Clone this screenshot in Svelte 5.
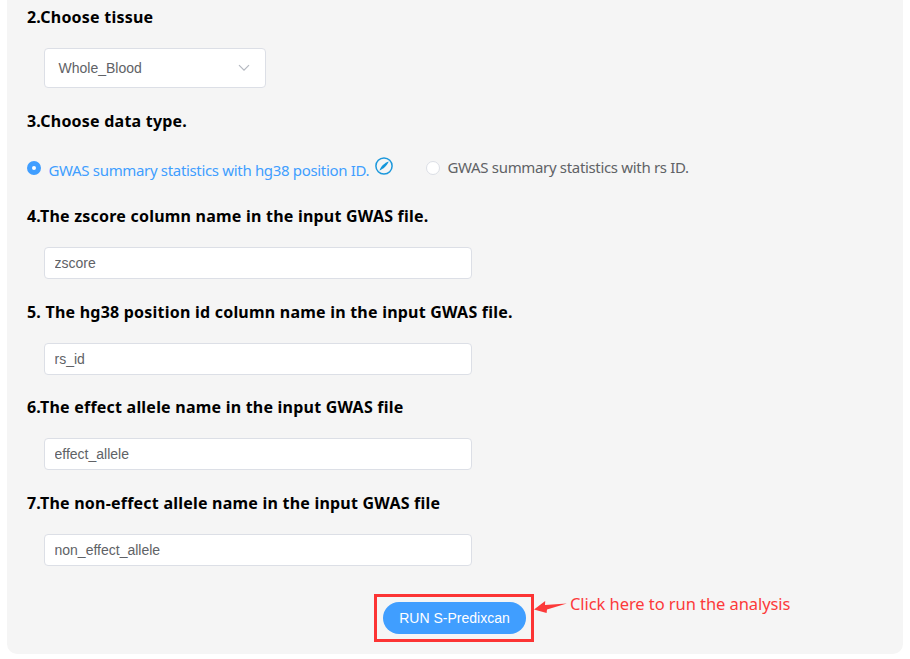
<script>
  const fields = [
    { title: '4.The zscore column name in the input GWAS file.', value: 'zscore' },
    { title: '5. The hg38 position id column name in the input GWAS file.', value: 'rs_id' },
    { title: '6.The effect allele name in the input GWAS file', value: 'effect_allele' },
    { title: '7.The non-effect allele name in the input GWAS file', value: 'non_effect_allele' }
  ];
</script>

<main class="panel">
  <h3>2.Choose tissue</h3>
  <div class="select">
    <span>Whole_Blood</span>
    <svg width="12" height="8" viewBox="0 0 12 8"><path d="M1 1.2 6 6.2 11 1.2" fill="none" stroke="#b4b8c0" stroke-width="1.2" /></svg>
  </div>

  <h3 class="type">3.Choose data type.</h3>
  <div class="radios">
    <div class="radio checked">
      <i class="dot"></i>
      <span class="label">GWAS summary statistics with hg38 position ID.</span>
      <svg class="compass" width="18" height="18" viewBox="0 0 18 18">
        <circle cx="9" cy="9" r="8.1" fill="none" stroke="#1c98dc" stroke-width="1.5" />
        <path d="M13.6 4.4C12.2 4.6 9.4 6.6 7.9 8.1 6.3 9.8 5 12 4.5 13.5 6 13 8.3 11.7 9.9 10.1 11.4 8.5 13.4 5.8 13.6 4.4Z" fill="#1296db" />
      </svg>
    </div>
    <div class="radio">
      <i class="dot"></i>
      <span class="label">GWAS summary statistics with rs ID.</span>
    </div>
  </div>

  {#each fields as field}
    <section>
      <h3>{field.title}</h3>
      <input type="text" value={field.value} />
    </section>
  {/each}

  <footer>
    <div class="frame"><button>RUN S-Predixcan</button></div>
    <svg class="arrow" width="34" height="14" viewBox="0 0 34 14"><path d="M0 9.4 11.2 1 11 4.9 32.8 3.4 13 9.4 12.6 12.9Z" fill="#fc3a3a" /></svg>
    <span class="hint">Click here to run the analysis</span>
  </footer>
</main>

<style>
  :global(body) { background: #fff; overflow: hidden; }
  .panel {
    box-sizing: border-box;
    width: 896px;
    height: 654px;
    margin-left: 7px;
    padding: 6px 20px 0;
    background: #f5f5f5;
    border-radius: 0 0 10px 10px;
    font-family: "Noto Sans", "Open Sans", sans-serif;
  }
  h3 {
    margin: 0;
    font-size: 16px;
    line-height: 22px;
    font-weight: 700;
    letter-spacing: 0.22px;
    color: #000;
    white-space: nowrap;
  }
  .select {
    box-sizing: border-box;
    display: flex;
    align-items: center;
    justify-content: space-between;
    width: 222px;
    height: 40px;
    margin: 20px 0 22px 17px;
    padding: 0 15px 0 13.5px;
    border: 1px solid #dcdfe6;
    border-radius: 4px;
    background: #fff;
    color: #606266;
    font: 14px "Liberation Sans", Arial, sans-serif;
  }
  .radios {
    display: flex;
    height: 73px;
    padding-top: 20px;
    box-sizing: border-box;
  }
  .radio {
    display: flex;
    align-items: flex-start;
    color: #606266;
    font-size: 15px;
    line-height: 22px;
    letter-spacing: -0.33px;
    white-space: nowrap;
  }
  .dot {
    box-sizing: border-box;
    flex: none;
    width: 14px;
    height: 14px;
    margin: 9px 7.5px 0 0;
    border: 1px solid #dcdfe6;
    border-radius: 50%;
    background: #fff;
  }
  .label { margin-top: 4px; }
  .checked { width: 399px; color: #409eff; }
  .checked .dot { border: 5px solid #409eff; }
  .checked .label { margin-top: 7px; }
  .compass { margin: 5px 0 0 5.5px; }
  section { margin-bottom: 21.5px; }
  input {
    box-sizing: border-box;
    display: block;
    width: 428px;
    height: 32px;
    margin: 20px 0 0 17px;
    padding: 0 9.5px;
    border: 1px solid #dcdfe6;
    border-radius: 4px;
    background: #fff;
    color: #606266;
    font: 14px "Liberation Sans", Arial, sans-serif;
    outline: none;
  }
  footer {
    display: flex;
    align-items: flex-start;
    height: 48px;
    margin: 28px 0 0 347px;
  }
  .frame {
    box-sizing: border-box;
    width: 160px;
    height: 48px;
    padding: 5px 6px;
    border: 3px solid #fc3434;
  }
  button {
    display: block;
    width: 143px;
    height: 32px;
    padding: 0;
    border: 0;
    border-radius: 16px;
    background: #409eff;
    color: #fff;
    font: 14px "Liberation Sans", Arial, sans-serif;
  }
  .arrow { margin-top: 6px; }
  .hint {
    margin: -1px 0 0 2px;
    color: #fc3a3a;
    font-size: 16.5px;
    line-height: 22px;
    letter-spacing: -0.07px;
    white-space: nowrap;
  }
</style>
